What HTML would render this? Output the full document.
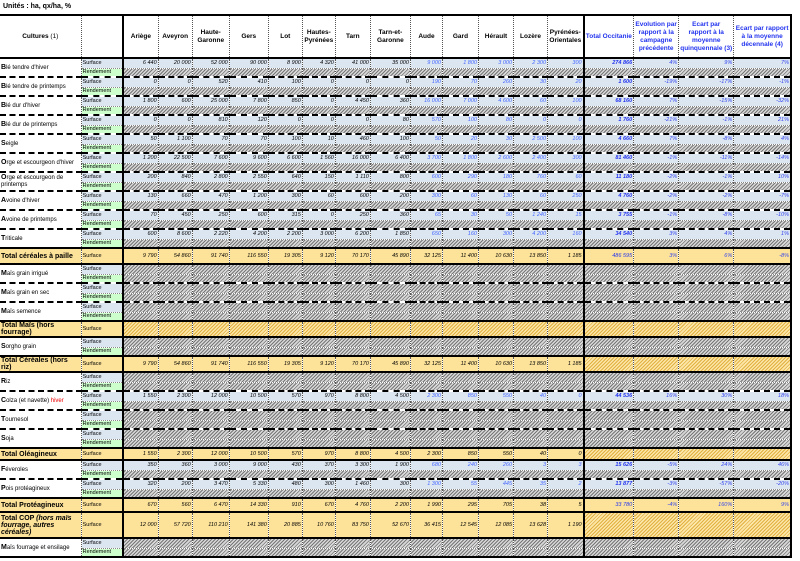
<!DOCTYPE html>
<html><head><meta charset="utf-8"><style>
*{margin:0;padding:0;box-sizing:border-box}
body{width:800px;height:561px;background:#fff;font-family:"Liberation Sans",sans-serif;position:relative;overflow:hidden}
.t{position:absolute;left:3px;top:3px;font-size:7px;font-weight:bold}
table{position:absolute;left:0;top:14px;border-collapse:collapse;table-layout:fixed;width:792px;border:2px solid #000;border-left:none}
td{padding:0 1px;font-size:5.5px;line-height:6px;overflow:hidden;white-space:nowrap;border-right:1px dotted #555;text-align:right;font-style:italic;vertical-align:middle}
.hd td{font-size:6.5px;font-weight:bold;font-style:normal;text-align:center;white-space:normal;line-height:8px;border-bottom:2px solid #000}
.hd td.bl{color:#2233ee}
td.n{text-align:left;font-style:normal;font-size:6px;background:#fff;border-right:1px dotted #555;white-space:normal;line-height:7px}
td.n b{font-size:7px}
td.ls{background:#dce6f1;text-align:left;font-style:normal;border-right:2px solid #000}
td.lr{background:#ccffcc;text-align:left;font-style:normal;border-right:2px solid #000;border-top:1px dotted #888}
.s{background:#dce6f1}
.h{background:repeating-linear-gradient(-45deg,#777 0 1px,#d8d8d8 1px 2.5px)}
.yh{background:repeating-linear-gradient(-45deg,#e0b040 0 1px,#fde7a8 1px 2.5px)}
.y td{background:#fde39a;border-top:2px solid #000;border-bottom:2px solid #000}
.y td.n{background:#fde39a;font-weight:bold;font-size:7px;line-height:7px}
.y td.yh{background:repeating-linear-gradient(-45deg,#e0b040 0 1px,#fde7a8 1px 2.5px)}
.b{color:#4466ff}
.tt{color:#2233ee;font-weight:bold;border-left:2px solid #000}
.p{color:#3344ee}
.k{border-bottom:2px dashed #000}
tr.r td{border-top:1px dotted #888}
</style></head><body>
<div class="t">Unités : ha, qx/ha, %</div>
<table>
<colgroup><col style="width:81px"><col style="width:42px"><col style="width:35px"><col style="width:34px"><col style="width:37px"><col style="width:39px"><col style="width:34px"><col style="width:33px"><col style="width:35px"><col style="width:40px"><col style="width:32px"><col style="width:36px"><col style="width:35px"><col style="width:34px"><col style="width:36px"><col style="width:50px"><col style="width:45px"><col style="width:55px"><col style="width:57px"></colgroup>
<tr class="hd" style="height:43px;border-top:2px solid #000"><td>Cultures <span style="font-weight:normal">(1)</span></td><td style="border-right:2px solid #000"></td><td>Ariège</td><td>Aveyron</td><td>Haute-Garonne</td><td>Gers</td><td>Lot</td><td>Hautes-Pyrénées</td><td>Tarn</td><td>Tarn-et-Garonne</td><td>Aude</td><td>Gard</td><td>Hérault</td><td>Lozère</td><td>Pyrénées-Orientales</td><td class="bl" style="border-left:2px solid #000">Total Occitanie</td><td class="bl">Evolution par rapport à la campagne précédente</td><td class="bl">Ecart par rapport à la moyenne quinquennale (3)</td><td class="bl">Ecart par rapport à la moyenne décennale (4)</td></tr>

<tr style="height:10px"><td class="n k" rowspan="2"><b>B</b>lé tendre d'hiver</td><td class="ls">Surface</td><td class="s">6 440</td><td class="s">20 000</td><td class="s">52 000</td><td class="s">90 000</td><td class="s">8 900</td><td class="s">4 320</td><td class="s">41 000</td><td class="s">35 000</td><td class="s b">9 000</td><td class="s b">1 800</td><td class="s b">3 000</td><td class="s b">2 300</td><td class="s b">300</td><td class="s tt">274 866</td><td class="s p">4%</td><td class="s p">9%</td><td class="s p">7%</td></tr>
<tr class="r" style="height:9px"><td class="lr k">Rendement</td><td class="h k"></td><td class="h k"></td><td class="h k"></td><td class="h k"></td><td class="h k"></td><td class="h k"></td><td class="h k"></td><td class="h k"></td><td class="h k"></td><td class="h k"></td><td class="h k"></td><td class="h k"></td><td class="h k"></td><td class="h k tt"></td><td class="h k"></td><td class="h k"></td><td class="h k"></td></tr>

<tr style="height:10px"><td class="n k" rowspan="2"><b>B</b>lé tendre de printemps</td><td class="ls">Surface</td><td class="s">0</td><td class="s">0</td><td class="s">520</td><td class="s">410</td><td class="s">100</td><td class="s">0</td><td class="s">0</td><td class="s">0</td><td class="s b">190</td><td class="s b">70</td><td class="s b">260</td><td class="s b">30</td><td class="s b">20</td><td class="s tt">1 600</td><td class="s p">-19%</td><td class="s p">-17%</td><td class="s p">-1%</td></tr>
<tr class="r" style="height:9px"><td class="lr k">Rendement</td><td class="h k"></td><td class="h k"></td><td class="h k"></td><td class="h k"></td><td class="h k"></td><td class="h k"></td><td class="h k"></td><td class="h k"></td><td class="h k"></td><td class="h k"></td><td class="h k"></td><td class="h k"></td><td class="h k"></td><td class="h k tt"></td><td class="h k"></td><td class="h k"></td><td class="h k"></td></tr>

<tr style="height:10px"><td class="n k" rowspan="2"><b>B</b>lé dur d'hiver</td><td class="ls">Surface</td><td class="s">1 800</td><td class="s">600</td><td class="s">25 000</td><td class="s">7 800</td><td class="s">850</td><td class="s">0</td><td class="s">4 450</td><td class="s">360</td><td class="s b">16 000</td><td class="s b">7 000</td><td class="s b">4 600</td><td class="s b">60</td><td class="s b">100</td><td class="s tt">68 160</td><td class="s p">7%</td><td class="s p">-15%</td><td class="s p">-32%</td></tr>
<tr class="r" style="height:9px"><td class="lr k">Rendement</td><td class="h k"></td><td class="h k"></td><td class="h k"></td><td class="h k"></td><td class="h k"></td><td class="h k"></td><td class="h k"></td><td class="h k"></td><td class="h k"></td><td class="h k"></td><td class="h k"></td><td class="h k"></td><td class="h k"></td><td class="h k tt"></td><td class="h k"></td><td class="h k"></td><td class="h k"></td></tr>

<tr style="height:10px"><td class="n k" rowspan="2"><b>B</b>lé dur de printemps</td><td class="ls">Surface</td><td class="s">0</td><td class="s">0</td><td class="s">810</td><td class="s">120</td><td class="s">0</td><td class="s">0</td><td class="s">0</td><td class="s">80</td><td class="s b">570</td><td class="s b">100</td><td class="s b">80</td><td class="s b">0</td><td class="s b">0</td><td class="s tt">1 760</td><td class="s p">-21%</td><td class="s p">-1%</td><td class="s p">21%</td></tr>
<tr class="r" style="height:9px"><td class="lr k">Rendement</td><td class="h k"></td><td class="h k"></td><td class="h k"></td><td class="h k"></td><td class="h k"></td><td class="h k"></td><td class="h k"></td><td class="h k"></td><td class="h k"></td><td class="h k"></td><td class="h k"></td><td class="h k"></td><td class="h k"></td><td class="h k tt"></td><td class="h k"></td><td class="h k"></td><td class="h k"></td></tr>

<tr style="height:10px"><td class="n k" rowspan="2"><b>S</b>eigle</td><td class="ls">Surface</td><td class="s">50</td><td class="s">1 100</td><td class="s">70</td><td class="s">70</td><td class="s">100</td><td class="s">10</td><td class="s">460</td><td class="s">100</td><td class="s b">50</td><td class="s b">20</td><td class="s b">30</td><td class="s b">2 500</td><td class="s b">100</td><td class="s tt">4 660</td><td class="s p">7%</td><td class="s p">-8%</td><td class="s p">4%</td></tr>
<tr class="r" style="height:9px"><td class="lr k">Rendement</td><td class="h k"></td><td class="h k"></td><td class="h k"></td><td class="h k"></td><td class="h k"></td><td class="h k"></td><td class="h k"></td><td class="h k"></td><td class="h k"></td><td class="h k"></td><td class="h k"></td><td class="h k"></td><td class="h k"></td><td class="h k tt"></td><td class="h k"></td><td class="h k"></td><td class="h k"></td></tr>

<tr style="height:10px"><td class="n k" rowspan="2"><b>O</b>rge et escourgeon d'hiver</td><td class="ls">Surface</td><td class="s">1 200</td><td class="s">22 500</td><td class="s">7 600</td><td class="s">9 600</td><td class="s">6 600</td><td class="s">1 560</td><td class="s">16 000</td><td class="s">6 400</td><td class="s b">3 700</td><td class="s b">1 800</td><td class="s b">2 600</td><td class="s b">2 400</td><td class="s b">300</td><td class="s tt">81 460</td><td class="s p">-1%</td><td class="s p">-11%</td><td class="s p">-14%</td></tr>
<tr class="r" style="height:9px"><td class="lr k">Rendement</td><td class="h k"></td><td class="h k"></td><td class="h k"></td><td class="h k"></td><td class="h k"></td><td class="h k"></td><td class="h k"></td><td class="h k"></td><td class="h k"></td><td class="h k"></td><td class="h k"></td><td class="h k"></td><td class="h k"></td><td class="h k tt"></td><td class="h k"></td><td class="h k"></td><td class="h k"></td></tr>

<tr style="height:10px"><td class="n k" rowspan="2"><b>O</b>rge et escourgeon de printemps</td><td class="ls">Surface</td><td class="s">200</td><td class="s">840</td><td class="s">2 800</td><td class="s">2 550</td><td class="s">640</td><td class="s">150</td><td class="s">1 110</td><td class="s">800</td><td class="s b">600</td><td class="s b">290</td><td class="s b">180</td><td class="s b">760</td><td class="s b">60</td><td class="s tt">11 180</td><td class="s p">-2%</td><td class="s p">-1%</td><td class="s p">10%</td></tr>
<tr class="r" style="height:9px"><td class="lr k">Rendement</td><td class="h k"></td><td class="h k"></td><td class="h k"></td><td class="h k"></td><td class="h k"></td><td class="h k"></td><td class="h k"></td><td class="h k"></td><td class="h k"></td><td class="h k"></td><td class="h k"></td><td class="h k"></td><td class="h k"></td><td class="h k tt"></td><td class="h k"></td><td class="h k"></td><td class="h k"></td></tr>

<tr style="height:10px"><td class="n k" rowspan="2"><b>A</b>voine d'hiver</td><td class="ls">Surface</td><td class="s">130</td><td class="s">660</td><td class="s">470</td><td class="s">1 200</td><td class="s">300</td><td class="s">60</td><td class="s">600</td><td class="s">200</td><td class="s b">300</td><td class="s b">60</td><td class="s b">130</td><td class="s b">60</td><td class="s b">250</td><td class="s tt">4 760</td><td class="s p">-2%</td><td class="s p">-2%</td><td class="s p">-7%</td></tr>
<tr class="r" style="height:9px"><td class="lr k">Rendement</td><td class="h k"></td><td class="h k"></td><td class="h k"></td><td class="h k"></td><td class="h k"></td><td class="h k"></td><td class="h k"></td><td class="h k"></td><td class="h k"></td><td class="h k"></td><td class="h k"></td><td class="h k"></td><td class="h k"></td><td class="h k tt"></td><td class="h k"></td><td class="h k"></td><td class="h k"></td></tr>

<tr style="height:10px"><td class="n k" rowspan="2"><b>A</b>voine de printemps</td><td class="ls">Surface</td><td class="s">70</td><td class="s">450</td><td class="s">250</td><td class="s">600</td><td class="s">315</td><td class="s">0</td><td class="s">250</td><td class="s">360</td><td class="s b">65</td><td class="s b">30</td><td class="s b">50</td><td class="s b">1 240</td><td class="s b">15</td><td class="s tt">3 755</td><td class="s p">-1%</td><td class="s p">-8%</td><td class="s p">-10%</td></tr>
<tr class="r" style="height:9px"><td class="lr k">Rendement</td><td class="h k"></td><td class="h k"></td><td class="h k"></td><td class="h k"></td><td class="h k"></td><td class="h k"></td><td class="h k"></td><td class="h k"></td><td class="h k"></td><td class="h k"></td><td class="h k"></td><td class="h k"></td><td class="h k"></td><td class="h k tt"></td><td class="h k"></td><td class="h k"></td><td class="h k"></td></tr>

<tr style="height:10px"><td class="n" rowspan="2"><b>T</b>riticale</td><td class="ls">Surface</td><td class="s">600</td><td class="s">8 600</td><td class="s">2 220</td><td class="s">4 200</td><td class="s">2 200</td><td class="s">3 000</td><td class="s">6 200</td><td class="s">1 850</td><td class="s b">650</td><td class="s b">160</td><td class="s b">300</td><td class="s b">4 200</td><td class="s b">160</td><td class="s tt">34 540</td><td class="s p">3%</td><td class="s p">4%</td><td class="s p">1%</td></tr>
<tr class="r" style="height:9px"><td class="lr">Rendement</td><td class="h"></td><td class="h"></td><td class="h"></td><td class="h"></td><td class="h"></td><td class="h"></td><td class="h"></td><td class="h"></td><td class="h"></td><td class="h"></td><td class="h"></td><td class="h"></td><td class="h"></td><td class="h tt"></td><td class="h"></td><td class="h"></td><td class="h"></td></tr>

<tr class="y" style="height:16px"><td class="n">Total céréales à paille</td><td class="ls" style="background:#fde39a">Surface</td><td>9 790</td><td>54 860</td><td>91 740</td><td>116 550</td><td>19 305</td><td>9 120</td><td>70 170</td><td>45 890</td><td>32 125</td><td>11 400</td><td>10 630</td><td>13 850</td><td>1 185</td><td class="tt" style="font-weight:normal">486 595</td><td class="p">3%</td><td class="p">6%</td><td class="p">-8%</td></tr>

<tr style="height:10px"><td class="n k" rowspan="2"><b>M</b>aïs grain irrigué</td><td class="ls">Surface</td><td class="h"></td><td class="h"></td><td class="h"></td><td class="h"></td><td class="h"></td><td class="h"></td><td class="h"></td><td class="h"></td><td class="h"></td><td class="h"></td><td class="h"></td><td class="h"></td><td class="h"></td><td class="h tt"></td><td class="h"></td><td class="h"></td><td class="h"></td></tr>
<tr class="r" style="height:9px"><td class="lr k">Rendement</td><td class="h k"></td><td class="h k"></td><td class="h k"></td><td class="h k"></td><td class="h k"></td><td class="h k"></td><td class="h k"></td><td class="h k"></td><td class="h k"></td><td class="h k"></td><td class="h k"></td><td class="h k"></td><td class="h k"></td><td class="h k tt"></td><td class="h k"></td><td class="h k"></td><td class="h k"></td></tr>
<tr style="height:10px"><td class="n k" rowspan="2"><b>M</b>aïs grain en sec</td><td class="ls">Surface</td><td class="h"></td><td class="h"></td><td class="h"></td><td class="h"></td><td class="h"></td><td class="h"></td><td class="h"></td><td class="h"></td><td class="h"></td><td class="h"></td><td class="h"></td><td class="h"></td><td class="h"></td><td class="h tt"></td><td class="h"></td><td class="h"></td><td class="h"></td></tr>
<tr class="r" style="height:9px"><td class="lr k">Rendement</td><td class="h k"></td><td class="h k"></td><td class="h k"></td><td class="h k"></td><td class="h k"></td><td class="h k"></td><td class="h k"></td><td class="h k"></td><td class="h k"></td><td class="h k"></td><td class="h k"></td><td class="h k"></td><td class="h k"></td><td class="h k tt"></td><td class="h k"></td><td class="h k"></td><td class="h k"></td></tr>
<tr style="height:10px"><td class="n" rowspan="2"><b>M</b>aïs semence</td><td class="ls">Surface</td><td class="h"></td><td class="h"></td><td class="h"></td><td class="h"></td><td class="h"></td><td class="h"></td><td class="h"></td><td class="h"></td><td class="h"></td><td class="h"></td><td class="h"></td><td class="h"></td><td class="h"></td><td class="h tt"></td><td class="h"></td><td class="h"></td><td class="h"></td></tr>
<tr class="r" style="height:9px"><td class="lr">Rendement</td><td class="h"></td><td class="h"></td><td class="h"></td><td class="h"></td><td class="h"></td><td class="h"></td><td class="h"></td><td class="h"></td><td class="h"></td><td class="h"></td><td class="h"></td><td class="h"></td><td class="h"></td><td class="h tt"></td><td class="h"></td><td class="h"></td><td class="h"></td></tr>

<tr class="y" style="height:16px"><td class="n">Total Maïs (hors fourrage)</td><td class="ls" style="background:#fde39a">Surface</td><td class="yh"></td><td class="yh"></td><td class="yh"></td><td class="yh"></td><td class="yh"></td><td class="yh"></td><td class="yh"></td><td class="yh"></td><td class="yh"></td><td class="yh"></td><td class="yh"></td><td class="yh"></td><td class="yh"></td><td class="yh tt"></td><td class="yh"></td><td class="yh"></td><td class="yh"></td></tr>

<tr style="height:10px"><td class="n" rowspan="2"><b>S</b>orgho grain</td><td class="ls">Surface</td><td class="h"></td><td class="h"></td><td class="h"></td><td class="h"></td><td class="h"></td><td class="h"></td><td class="h"></td><td class="h"></td><td class="h"></td><td class="h"></td><td class="h"></td><td class="h"></td><td class="h"></td><td class="h tt"></td><td class="h"></td><td class="h"></td><td class="h"></td></tr>
<tr class="r" style="height:9px"><td class="lr">Rendement</td><td class="h"></td><td class="h"></td><td class="h"></td><td class="h"></td><td class="h"></td><td class="h"></td><td class="h"></td><td class="h"></td><td class="h"></td><td class="h"></td><td class="h"></td><td class="h"></td><td class="h"></td><td class="h tt"></td><td class="h"></td><td class="h"></td><td class="h"></td></tr>

<tr class="y" style="height:16px"><td class="n">Total Céréales (hors riz)</td><td class="ls" style="background:#fde39a">Surface</td><td>9 790</td><td>54 860</td><td>91 740</td><td>116 550</td><td>19 305</td><td>9 120</td><td>70 170</td><td>45 890</td><td>32 125</td><td>11 400</td><td>10 630</td><td>13 850</td><td>1 185</td><td class="yh tt"></td><td class="yh"></td><td class="yh"></td><td class="yh"></td></tr>

<tr style="height:10px"><td class="n k" rowspan="2"><b>R</b>iz</td><td class="ls">Surface</td><td class="h"></td><td class="h"></td><td class="h"></td><td class="h"></td><td class="h"></td><td class="h"></td><td class="h"></td><td class="h"></td><td class="h"></td><td class="h"></td><td class="h"></td><td class="h"></td><td class="h"></td><td class="h tt"></td><td class="h"></td><td class="h"></td><td class="h"></td></tr>
<tr class="r" style="height:9px"><td class="lr k">Rendement</td><td class="h k"></td><td class="h k"></td><td class="h k"></td><td class="h k"></td><td class="h k"></td><td class="h k"></td><td class="h k"></td><td class="h k"></td><td class="h k"></td><td class="h k"></td><td class="h k"></td><td class="h k"></td><td class="h k"></td><td class="h k tt"></td><td class="h k"></td><td class="h k"></td><td class="h k"></td></tr>

<tr style="height:10px"><td class="n k" rowspan="2"><b>C</b>olza (et navette) <span style="color:#e00">hiver</span></td><td class="ls">Surface</td><td class="s">1 550</td><td class="s">2 300</td><td class="s">12 000</td><td class="s">10 500</td><td class="s">570</td><td class="s">970</td><td class="s">8 800</td><td class="s">4 500</td><td class="s b">2 300</td><td class="s b">850</td><td class="s b">550</td><td class="s b">40</td><td class="s b">0</td><td class="s tt">44 536</td><td class="s p">16%</td><td class="s p">30%</td><td class="s p">18%</td></tr>
<tr class="r" style="height:9px"><td class="lr k">Rendement</td><td class="h k"></td><td class="h k"></td><td class="h k"></td><td class="h k"></td><td class="h k"></td><td class="h k"></td><td class="h k"></td><td class="h k"></td><td class="h k"></td><td class="h k"></td><td class="h k"></td><td class="h k"></td><td class="h k"></td><td class="h k tt"></td><td class="h k"></td><td class="h k"></td><td class="h k"></td></tr>

<tr style="height:10px"><td class="n k" rowspan="2"><b>T</b>ournesol</td><td class="ls">Surface</td><td class="h"></td><td class="h"></td><td class="h"></td><td class="h"></td><td class="h"></td><td class="h"></td><td class="h"></td><td class="h"></td><td class="h"></td><td class="h"></td><td class="h"></td><td class="h"></td><td class="h"></td><td class="h tt"></td><td class="h"></td><td class="h"></td><td class="h"></td></tr>
<tr class="r" style="height:9px"><td class="lr k">Rendement</td><td class="h k"></td><td class="h k"></td><td class="h k"></td><td class="h k"></td><td class="h k"></td><td class="h k"></td><td class="h k"></td><td class="h k"></td><td class="h k"></td><td class="h k"></td><td class="h k"></td><td class="h k"></td><td class="h k"></td><td class="h k tt"></td><td class="h k"></td><td class="h k"></td><td class="h k"></td></tr>

<tr style="height:10px"><td class="n" rowspan="2"><b>S</b>oja</td><td class="ls">Surface</td><td class="h"></td><td class="h"></td><td class="h"></td><td class="h"></td><td class="h"></td><td class="h"></td><td class="h"></td><td class="h"></td><td class="h"></td><td class="h"></td><td class="h"></td><td class="h"></td><td class="h"></td><td class="h tt"></td><td class="h"></td><td class="h"></td><td class="h"></td></tr>
<tr class="r" style="height:9px"><td class="lr">Rendement</td><td class="h"></td><td class="h"></td><td class="h"></td><td class="h"></td><td class="h"></td><td class="h"></td><td class="h"></td><td class="h"></td><td class="h"></td><td class="h"></td><td class="h"></td><td class="h"></td><td class="h"></td><td class="h tt"></td><td class="h"></td><td class="h"></td><td class="h"></td></tr>

<tr class="y" style="height:12px"><td class="n">Total Oléagineux</td><td class="ls" style="background:#fde39a">Surface</td><td>1 550</td><td>2 300</td><td>12 000</td><td>10 500</td><td>570</td><td>970</td><td>8 800</td><td>4 500</td><td>2 300</td><td>850</td><td>550</td><td>40</td><td>0</td><td class="yh tt"></td><td class="yh"></td><td class="yh"></td><td class="yh"></td></tr>

<tr style="height:10px"><td class="n k" rowspan="2"><b>F</b>éveroles</td><td class="ls">Surface</td><td class="s">350</td><td class="s">360</td><td class="s">3 000</td><td class="s">9 000</td><td class="s">430</td><td class="s">370</td><td class="s">3 300</td><td class="s">1 900</td><td class="s b">680</td><td class="s b">240</td><td class="s b">260</td><td class="s b">3</td><td class="s b">3</td><td class="s tt">15 626</td><td class="s p">-5%</td><td class="s p">24%</td><td class="s p">46%</td></tr>
<tr class="r" style="height:9px"><td class="lr k">Rendement</td><td class="h k"></td><td class="h k"></td><td class="h k"></td><td class="h k"></td><td class="h k"></td><td class="h k"></td><td class="h k"></td><td class="h k"></td><td class="h k"></td><td class="h k"></td><td class="h k"></td><td class="h k"></td><td class="h k"></td><td class="h k tt"></td><td class="h k"></td><td class="h k"></td><td class="h k"></td></tr>

<tr style="height:10px"><td class="n" rowspan="2"><b>P</b>ois protéagineux</td><td class="ls">Surface</td><td class="s">320</td><td class="s">200</td><td class="s">3 470</td><td class="s">5 330</td><td class="s">480</td><td class="s">300</td><td class="s">1 460</td><td class="s">300</td><td class="s b">1 300</td><td class="s b">55</td><td class="s b">445</td><td class="s b">35</td><td class="s b">2</td><td class="s tt">13 877</td><td class="s p">-3%</td><td class="s p">-57%</td><td class="s p">-20%</td></tr>
<tr class="r" style="height:9px"><td class="lr">Rendement</td><td class="h"></td><td class="h"></td><td class="h"></td><td class="h"></td><td class="h"></td><td class="h"></td><td class="h"></td><td class="h"></td><td class="h"></td><td class="h"></td><td class="h"></td><td class="h"></td><td class="h"></td><td class="h tt"></td><td class="h"></td><td class="h"></td><td class="h"></td></tr>

<tr class="y" style="height:14px"><td class="n">Total Protéagineux</td><td class="ls" style="background:#fde39a">Surface</td><td>670</td><td>560</td><td>6 470</td><td>14 330</td><td>910</td><td>670</td><td>4 760</td><td>2 200</td><td>1 990</td><td>295</td><td>705</td><td>38</td><td>5</td><td class="tt" style="font-weight:normal">33 780</td><td class="p">-4%</td><td class="p">160%</td><td class="p">9%</td></tr>

<tr class="y" style="height:26px"><td class="n">Total COP <i>(hors maïs fourrage, autres céréales)</i></td><td class="ls" style="background:#fde39a">Surface</td><td>12 000</td><td>57 720</td><td>110 210</td><td>141 380</td><td>20 885</td><td>10 760</td><td>83 750</td><td>52 670</td><td>36 415</td><td>12 545</td><td>12 085</td><td>13 628</td><td>1 190</td><td class="yh tt"></td><td class="yh"></td><td class="yh"></td><td class="yh"></td></tr>

<tr style="height:10px"><td class="n" rowspan="2"><b>M</b>aïs fourrage et ensilage</td><td class="ls">Surface</td><td class="h"></td><td class="h"></td><td class="h"></td><td class="h"></td><td class="h"></td><td class="h"></td><td class="h"></td><td class="h"></td><td class="h"></td><td class="h"></td><td class="h"></td><td class="h"></td><td class="h"></td><td class="h tt"></td><td class="h"></td><td class="h"></td><td class="h"></td></tr>
<tr class="r" style="height:9px"><td class="lr">Rendement</td><td class="h"></td><td class="h"></td><td class="h"></td><td class="h"></td><td class="h"></td><td class="h"></td><td class="h"></td><td class="h"></td><td class="h"></td><td class="h"></td><td class="h"></td><td class="h"></td><td class="h"></td><td class="h tt"></td><td class="h"></td><td class="h"></td><td class="h"></td></tr>
</table>
</body></html>
